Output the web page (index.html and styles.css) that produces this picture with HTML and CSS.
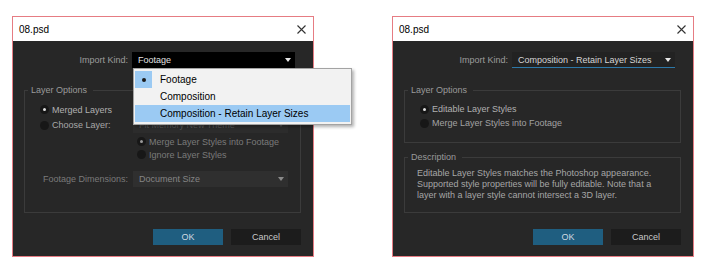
FILE: index.html
```html
<!DOCTYPE html>
<html lang="en">
<head>
    <meta charset="UTF-8">
    <title>Import 08.psd</title>
    <link rel="stylesheet" href="styles.css">
</head>
<body>

<div class="stage">

    <!-- dialog with the kind menu open -->
    <div class="dialog">
        <div class="titlebar">
            <span class="title">08.psd</span>
            <svg class="close" width="9" height="9" viewBox="0 0 9 9"><path d="M0.5 0.5L8.5 8.5M8.5 0.5L0.5 8.5" stroke="#333" stroke-width="1.1"/></svg>
        </div>
        <div class="dialog-body">
            <div class="kind-row">
                <span class="kind-label">Import Kind:</span>
                <div class="select select-black">
                    <span>Footage</span><span class="arrow"></span>
                    <ul class="menu">
                        <li class="checked"><span class="check"><i></i></span>Footage</li>
                        <li><span class="check"></span>Composition</li>
                        <li class="hover"><span class="check"></span>Composition - Retain Layer Sizes</li>
                    </ul>
                </div>
            </div>

            <fieldset class="group">
                <legend>Layer Options</legend>
                <div class="opts">
                    <div class="radio on">Merged Layers</div>
                    <div class="choose-row">
                        <div class="radio">Choose Layer:</div>
                        <div class="select select-off"><span>Fit Memory New Theme</span><span class="arrow"></span></div>
                    </div>
                    <div class="radio sub on off first">Merge Layer Styles into Footage</div>
                    <div class="radio sub off">Ignore Layer Styles</div>
                    <div class="dims-row">
                        <span class="dims-label">Footage Dimensions:</span>
                        <div class="select select-dim"><span>Document Size</span><span class="arrow"></span></div>
                    </div>
                </div>
            </fieldset>

            <div class="buttons">
                <button class="btn btn-ok">OK</button>
                <button class="btn">Cancel</button>
            </div>
        </div>
    </div>

    <!-- dialog with composition chosen -->
    <div class="dialog">
        <div class="titlebar">
            <span class="title">08.psd</span>
            <svg class="close" width="9" height="9" viewBox="0 0 9 9"><path d="M0.5 0.5L8.5 8.5M8.5 0.5L0.5 8.5" stroke="#333" stroke-width="1.1"/></svg>
        </div>
        <div class="dialog-body">
            <div class="kind-row">
                <span class="kind-label">Import Kind:</span>
                <div class="select select-focus">
                    <span>Composition - Retain Layer Sizes</span><span class="arrow"></span>
                </div>
            </div>

            <fieldset class="group group-short">
                <legend>Layer Options</legend>
                <div class="opts">
                    <div class="radio on tight">Editable Layer Styles</div>
                    <div class="radio tight dim">Merge Layer Styles into Footage</div>
                </div>
            </fieldset>

            <fieldset class="group group-desc">
                <legend>Description</legend>
                <p class="desc">Editable Layer Styles matches the Photoshop appearance.<br>Supported style properties will be fully editable. Note that a<br>layer with a layer style cannot intersect a 3D layer.</p>
            </fieldset>

            <div class="buttons">
                <button class="btn btn-ok">OK</button>
                <button class="btn">Cancel</button>
            </div>
        </div>
    </div>

</div>

</body>
</html>
```

FILE: styles.css
```css
body {
    margin: 0;
    padding: 16px 0 0 12px;
    background-color: #ffffff;
    font-family: 'Liberation Sans', Arial, sans-serif;
    font-size: 9px;
}
.stage {
    display: flex;
    gap: 78px;
}
.dialog {
    width: 300px;
    border: 1px solid #e67c83; /* pink window frame */
    display: flex;
    flex-direction: column;
}
.titlebar {
    height: 24px;
    background-color: #ffffff;
    display: flex;
    align-items: center;
    justify-content: space-between;
    padding: 0 7px 0 6px;
}
.title {
    font-size: 10px;
    color: #000000;
}
.close {
    margin-top: 1px;
}
.dialog-body {
    height: 204px;
    background-color: #272727;
    padding: 0 12px 11px 11px;
    display: flex;
    flex-direction: column;
}

/* import kind row */
.kind-row {
    display: flex;
    align-items: center;
    margin-top: 11px;
    height: 16px;
}
.kind-label {
    width: 104px;
    text-align: right;
    color: #9c9c9c;
    margin-right: 4px;
}
.select {
    position: relative;
    display: flex;
    align-items: center;
    justify-content: space-between;
    box-sizing: border-box;
    height: 16px;
    padding: 0 4px 0 6px;
}
.select .arrow {
    width: 0;
    height: 0;
    border-left: 3.5px solid transparent;
    border-right: 3.5px solid transparent;
    border-top: 4px solid #e8e8e8;
}
.kind-row .select {
    width: 163px;
}
.select-black {
    background-color: #000000;
    color: #e2e2e2;
}
.select-focus {
    background-color: #222222;
    color: #d6d6d6;
    border-bottom: 1px solid #2d78a8;
}
.select-off {
    width: 155px;
    background-color: #2c2c2c;
    color: #555555;
}
.select-off .arrow {
    border-top-color: #555555;
}
.select-dim {
    width: 155px;
    background-color: #2f2f2f;
    color: #858585;
}
.select-dim .arrow {
    border-top-color: #8a8a8a;
}

/* the open kind menu */
.menu {
    position: absolute;
    left: 1px;
    top: 16px;
    z-index: 2;
    width: 215px;
    margin: 0;
    padding: 2px 1px;
    list-style: none;
    background-color: #f2f2f2;
    border: 1px solid #a3a3a3;
    box-shadow: 2px 2px 3px rgba(0,0,0,0.3);
    font-size: 10px;
    color: #000000;
}
.menu li {
    display: flex;
    align-items: center;
    height: 17px;
}
.menu li.hover {
    background-color: #9bcaf3;
}
.check {
    width: 17px;
    height: 17px;
    margin-right: 8px;
    display: flex;
    align-items: center;
    justify-content: center;
}
.checked .check {
    background-color: #9bcaf3;
}
.check i {
    width: 4px;
    height: 4px;
    border-radius: 50%;
    background-color: #1a1a1a;
}

/* grouped options */
.group {
    margin: 16px 0 0 0;
    padding: 0 11px 25px 3px;
    border: 1px solid #3b3b3b;
    min-width: 0;
}
.group legend {
    padding: 0 6px 0 3px;
    line-height: 12px;
    color: #9a9a9a;
}
.opts {
    padding: 6px 0 0 12px;
}
.radio {
    display: flex;
    align-items: center;
    height: 15px;
    color: #b0b0b0;
}
.radio::before {
    content: "";
    width: 9px;
    height: 9px;
    border-radius: 50%;
    background-color: #171717;
    margin-right: 3px;
    box-sizing: border-box;
}
.radio.on::before {
    border: 3px solid #171717;
    background-color: #e0e0e0;
}
.radio.tight {
    height: 14px;
}
.radio.dim {
    color: #a2a2a2;
}
.choose-row {
    display: flex;
    align-items: center;
    height: 16px;
}
.choose-row .radio {
    width: 93px;
    color: #a8a8a8;
}
.radio.sub {
    height: 13px;
    margin-left: 97px;
}
.radio.sub.first {
    margin-top: 2px;
}
.radio.off {
    color: #7a7a7a;
}
.radio.off.on::before {
    background-color: #9a9a9a;
}
.dims-row {
    display: flex;
    align-items: center;
    margin-top: 10px;
    height: 16px;
}
.dims-label {
    width: 88px;
    margin-right: 5px;
    text-align: right;
    color: #7a7a7a;
}
.group-short {
    padding-bottom: 12px;
}
.group-desc {
    margin-top: 8px;
    padding-bottom: 11px;
}
.desc {
    margin: 0;
    padding: 5px 0 0 9px;
    line-height: 11px;
    white-space: nowrap;
    color: #a6a6a6;
}

/* buttons */
.buttons {
    margin-top: auto;
    display: flex;
    justify-content: flex-end;
    gap: 8px;
}
.btn {
    width: 70px;
    height: 16px;
    padding: 0;
    border: none;
    background-color: #1c1c1c;
    color: #c8c8c8;
    font-family: 'Liberation Sans', Arial, sans-serif;
    font-size: 9px;
}
.btn-ok {
    background-color: #1f5e80;
    color: #d0dae0;
}
```
